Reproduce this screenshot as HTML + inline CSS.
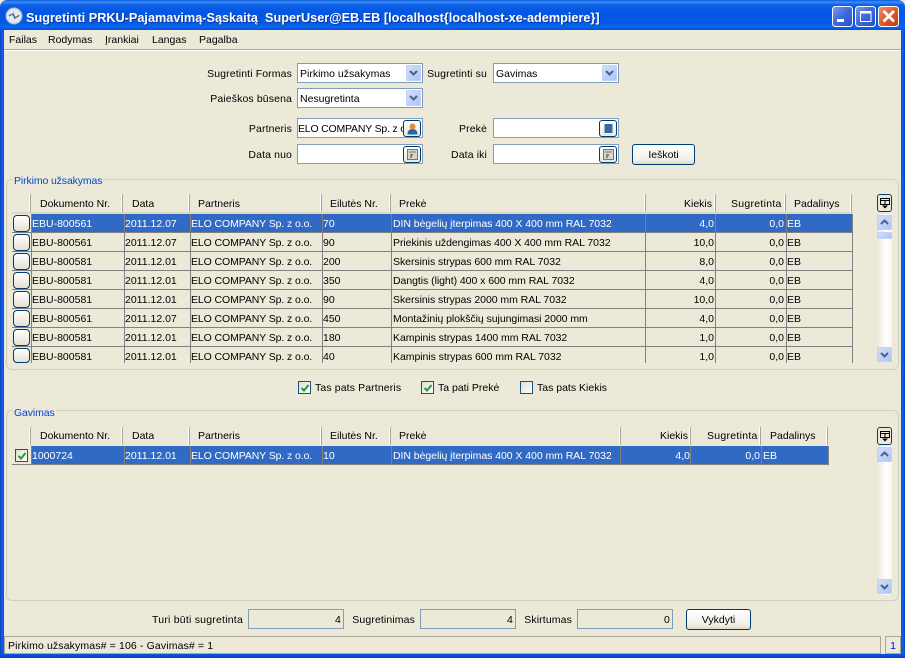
<!DOCTYPE html>
<html><head><meta charset="utf-8"><style>
html,body{margin:0;padding:0}
#w{position:relative;width:905px;height:658px;overflow:hidden;background:#ece9d8;font:10.5px/14px "Liberation Sans","DejaVu Sans",sans-serif;color:#000}
#w div,#w span.a,#w svg{position:absolute}
#w span{white-space:pre}
.l{position:absolute;white-space:pre}
.r{position:absolute;text-align:right;white-space:pre;letter-spacing:.12px}
.f{background:#fff;border:1px solid #7f9db9;box-sizing:border-box}
.ar{background:linear-gradient(135deg,#d5e1fc,#a9c2f5);border-radius:1px;box-shadow:inset 0 0 0 1px #c3d3f8}
.ib{box-sizing:border-box;border:1px solid #003c74;border-radius:3px;background:linear-gradient(#fff,#ece9d8)}
.bt{box-sizing:border-box;border:1px solid #003c74;border-radius:3px;background:linear-gradient(#fff,#f0efe6 80%,#dcd8c8);text-align:center;line-height:20px}
.gr{box-sizing:border-box;border:1px solid #d0d0bf;border-radius:6px}
.lg{color:#0046d5;background:#ece9d8;padding:0 1px;letter-spacing:-.12px}
.hs{width:1px;height:18px;background:#fff;border-right:1px solid #aca899;box-sizing:content-box}
.row{left:12px;height:19px;border-bottom:1px solid #808080;box-sizing:border-box}
.sel{background:#316ac5;color:#fff}
.v{width:1px;background:#808080}
.cb{left:13px;width:17px;height:17px;box-sizing:border-box;border:1px solid #003c74;border-radius:4px;background:linear-gradient(#fff,#e4e1d2)}
.s{position:absolute;top:3px;white-space:pre}
.c1{left:20px}.c2{left:113px}.c3{left:179px;letter-spacing:-.1px}.c4{left:311px}.c5{left:381px;letter-spacing:-.05px}
.q1{left:633px;width:69px;text-align:right}.q2{left:703px;width:69px;text-align:right}.q3{left:775px}
.q4{left:609px;width:69px;text-align:right}.q5{left:679px;width:69px;text-align:right}.q6{left:751px}
.sc{left:877px;width:15px;background:linear-gradient(90deg,#ebe8d9,#fff 60%,#f5f5f0)}
.lb{letter-spacing:.12px}
.sg{letter-spacing:.28px}
</style></head><body><div id="w">

<!-- window frame -->
<div style="left:0;top:0;width:905px;height:30px;background:linear-gradient(#0a5be0 0,#3a8cf5 2px,#0d5fe6 5px,#0457e2 12px,#0358e4 22px,#0a66f0 27px,#0350d0 30px);border-radius:7px 7px 0 0"></div>
<div style="left:0;top:30px;width:4px;height:628px;background:linear-gradient(90deg,#0a3ec0,#1160ea 50%,#0a50e0)"></div>
<div style="left:901px;top:30px;width:4px;height:628px;background:linear-gradient(90deg,#0a50e0,#1160ea 50%,#0a3ec0)"></div>
<div style="left:0;top:654px;width:905px;height:4px;background:linear-gradient(#0a55e0,#0a3ec0)"></div>

<svg style="left:5px;top:7px" width="18" height="18"><circle cx="9" cy="9" r="8" fill="#e4e8ee" stroke="#9fb2d8"/><path d="M4 9q3-3 5 0t5-1M8 6l2 6" stroke="#4a6a9c" fill="none" stroke-width="1.3"/></svg>
<span class="l" style="left:26px;top:10px;color:#fff;font:bold 12.7px/16px 'Liberation Sans',sans-serif;text-shadow:1px 1px 0 #0a3a9c">Sugretinti PRKU-Pajamavimą-Sąskaitą  SuperUser@EB.EB [localhost{localhost-xe-adempiere}]</span>

<svg style="left:832px;top:6px" width="67" height="21">
<defs><linearGradient id="b" x1="0" y1="0" x2="1" y2="1"><stop offset="0" stop-color="#7b9cf0"/><stop offset=".5" stop-color="#3e68da"/><stop offset="1" stop-color="#2a4ec8"/></linearGradient>
<linearGradient id="c" x1="0" y1="0" x2="1" y2="1"><stop offset="0" stop-color="#f09070"/><stop offset=".5" stop-color="#df5a30"/><stop offset="1" stop-color="#c23a10"/></linearGradient></defs>
<rect x=".5" y=".5" width="20" height="20" rx="3" fill="url(#b)" stroke="#fff"/>
<rect x="5" y="13" width="7" height="3" fill="#fff"/>
<rect x="23.5" y=".5" width="20" height="20" rx="3" fill="url(#b)" stroke="#fff"/>
<rect x="28.5" y="5.5" width="10.5" height="10" fill="none" stroke="#fff"/><rect x="28" y="5" width="11.5" height="2.5" fill="#fff"/>
<rect x="46.5" y=".5" width="20" height="20" rx="3" fill="url(#c)" stroke="#fff"/>
<path d="M51.5 5l10.5 10.5M62 5L51.5 15.5" stroke="#fff" stroke-width="2.8"/>
</svg>

<!-- menu -->
<span class="l" style="left:9px;top:33px">Failas</span>
<span class="l" style="left:48px;top:33px">Rodymas</span>
<span class="l" style="left:105px;top:33px">Įrankiai</span>
<span class="l" style="left:152px;top:33px">Langas</span>
<span class="l" style="left:199px;top:33px">Pagalba</span>
<div style="left:4px;top:49px;width:897px;height:1px;background:#aca899"></div>
<div style="left:4px;top:50px;width:897px;height:1px;background:#fff"></div>

<!-- form -->
<span class="r" style="right:613px;top:67px">Sugretinti Formas</span>
<span class="r" style="right:613px;top:92px">Paieškos būsena</span>
<span class="r" style="right:613px;top:122px">Partneris</span>
<span class="r" style="right:613px;top:148px">Data nuo</span>
<span class="r" style="right:418px;top:67px">Sugretinti su</span>
<span class="r" style="right:418px;top:122px">Prekė</span>
<span class="r" style="right:418px;top:148px">Data iki</span>

<div class="f" style="left:297px;top:63px;width:126px;height:20px"><span class="l" style="left:2px;top:3px">Pirkimo užsakymas</span></div>
<div class="ar" style="left:406px;top:65px;width:15px;height:16px"><svg style="left:3px;top:5px" width="9" height="6"><path d="M1 1l3.5 3.5L8 1" fill="none" stroke="#4d6185" stroke-width="2"/></svg></div>
<div class="f" style="left:297px;top:88px;width:126px;height:20px"><span class="l" style="left:2px;top:3px">Nesugretinta</span></div>
<div class="ar" style="left:406px;top:90px;width:15px;height:16px"><svg style="left:3px;top:5px" width="9" height="6"><path d="M1 1l3.5 3.5L8 1" fill="none" stroke="#4d6185" stroke-width="2"/></svg></div>
<div class="f" style="left:493px;top:63px;width:126px;height:20px"><span class="l" style="left:2px;top:3px">Gavimas</span></div>
<div class="ar" style="left:602px;top:65px;width:15px;height:16px"><svg style="left:3px;top:5px" width="9" height="6"><path d="M1 1l3.5 3.5L8 1" fill="none" stroke="#4d6185" stroke-width="2"/></svg></div>

<div class="f" style="left:297px;top:118px;width:126px;height:20px;overflow:hidden"><span class="l" style="left:0;top:3px;width:105px;overflow:hidden;letter-spacing:-.2px">ELO COMPANY Sp. z o.o.</span></div>
<div class="ib" style="left:403px;top:120px;width:18px;height:17px"><svg style="left:2px;top:1px" width="13" height="13"><path d="M1.500 12.500q0-5.500 5-5.500t5 5.500z" fill="#2f5fa8"/><circle cx="6.500" cy="4.500" r="3" fill="#d8903c"/></svg></div>
<div class="f" style="left:493px;top:118px;width:126px;height:20px"></div>
<div class="ib" style="left:599px;top:120px;width:18px;height:17px"><svg style="left:2px;top:1px" width="13" height="13"><rect x="2.500" y="2" width="8" height="9" fill="#3a66a8"/></svg></div>
<div class="f" style="left:297px;top:144px;width:126px;height:20px"></div>
<div class="ib" style="left:403px;top:146px;width:18px;height:17px"><svg style="left:2px;top:1px" width="13" height="13"><rect x="1.500" y="1.500" width="10" height="10" fill="#d8d6ca" stroke="#77776c"/><path d="M3 4h7" stroke="#77776c"/><path d="M4 7h3M4 9h2" stroke="#333"/></svg></div>
<div class="f" style="left:493px;top:144px;width:126px;height:20px"></div>
<div class="ib" style="left:599px;top:146px;width:18px;height:17px"><svg style="left:2px;top:1px" width="13" height="13"><rect x="1.500" y="1.500" width="10" height="10" fill="#d8d6ca" stroke="#77776c"/><path d="M3 4h7" stroke="#77776c"/><path d="M4 7h3M4 9h2" stroke="#333"/></svg></div>
<div class="bt" style="left:632px;top:144px;width:63px;height:21px">Ieškoti</div>

<!-- group 1 -->
<div class="gr" style="left:6px;top:179px;width:893px;height:191px"></div>
<span class="l lg" style="left:13px;top:174px">Pirkimo užsakymas</span>

<div style="left:12px;top:194px;width:842px;height:20px;background:#ece9d8">
<span class="s" style="left:28px">Dokumento Nr.</span><span class="s" style="left:120px">Data</span><span class="s" style="left:186px">Partneris</span><span class="s" style="left:318px">Eilutės Nr.</span><span class="s" style="left:387px">Prekė</span><span class="s" style="left:672px">Kiekis</span><span class="s sg" style="left:719px">Sugretinta</span><span class="s" style="left:782px">Padalinys</span>
</div>
<div class="hs" style="left:29px;top:194px"></div><div class="hs" style="left:121px;top:194px"></div><div class="hs" style="left:188px;top:194px"></div><div class="hs" style="left:320px;top:194px"></div><div class="hs" style="left:389px;top:194px"></div><div class="hs" style="left:644px;top:194px"></div><div class="hs" style="left:714px;top:194px"></div><div class="hs" style="left:784px;top:194px"></div><div class="hs" style="left:850px;top:194px"></div>
<div style="left:12px;top:212px;width:841px;height:2px;background:#dcd8c8"></div>

<div class="row sel" style="top:214px;width:841px"><span class="s c1">EBU-800561</span><span class="s c2">2011.12.07</span><span class="s c3">ELO COMPANY Sp. z o.o.</span><span class="s c4">70</span><span class="s c5">DIN bėgelių įterpimas 400 X 400 mm RAL 7032</span><span class="s q1">4,0</span><span class="s q2">0,0</span><span class="s q3">EB</span></div>
<div class="row" style="top:233px;width:841px"><span class="s c1">EBU-800561</span><span class="s c2">2011.12.07</span><span class="s c3">ELO COMPANY Sp. z o.o.</span><span class="s c4">90</span><span class="s c5">Priekinis uždengimas 400 X 400 mm RAL 7032</span><span class="s q1">10,0</span><span class="s q2">0,0</span><span class="s q3">EB</span></div>
<div class="row" style="top:252px;width:841px"><span class="s c1">EBU-800581</span><span class="s c2">2011.12.01</span><span class="s c3">ELO COMPANY Sp. z o.o.</span><span class="s c4">200</span><span class="s c5">Skersinis strypas 600 mm RAL 7032</span><span class="s q1">8,0</span><span class="s q2">0,0</span><span class="s q3">EB</span></div>
<div class="row" style="top:271px;width:841px"><span class="s c1">EBU-800581</span><span class="s c2">2011.12.01</span><span class="s c3">ELO COMPANY Sp. z o.o.</span><span class="s c4">350</span><span class="s c5">Dangtis (light) 400 x 600 mm RAL 7032</span><span class="s q1">4,0</span><span class="s q2">0,0</span><span class="s q3">EB</span></div>
<div class="row" style="top:290px;width:841px"><span class="s c1">EBU-800581</span><span class="s c2">2011.12.01</span><span class="s c3">ELO COMPANY Sp. z o.o.</span><span class="s c4">90</span><span class="s c5">Skersinis strypas 2000 mm RAL 7032</span><span class="s q1">10,0</span><span class="s q2">0,0</span><span class="s q3">EB</span></div>
<div class="row" style="top:309px;width:841px"><span class="s c1">EBU-800561</span><span class="s c2">2011.12.07</span><span class="s c3">ELO COMPANY Sp. z o.o.</span><span class="s c4">450</span><span class="s c5">Montažinių plokščių sujungimasi 2000 mm</span><span class="s q1">4,0</span><span class="s q2">0,0</span><span class="s q3">EB</span></div>
<div class="row" style="top:328px;width:841px"><span class="s c1">EBU-800581</span><span class="s c2">2011.12.01</span><span class="s c3">ELO COMPANY Sp. z o.o.</span><span class="s c4">180</span><span class="s c5">Kampinis strypas 1400 mm RAL 7032</span><span class="s q1">1,0</span><span class="s q2">0,0</span><span class="s q3">EB</span></div>
<div class="row" style="top:347px;width:841px;height:16px;border-bottom:0"><span class="s c1">EBU-800581</span><span class="s c2">2011.12.01</span><span class="s c3">ELO COMPANY Sp. z o.o.</span><span class="s c4">40</span><span class="s c5">Kampinis strypas 600 mm RAL 7032</span><span class="s q1">1,0</span><span class="s q2">0,0</span><span class="s q3">EB</span></div>

<div class="v" style="left:31px;top:214px;height:149px"></div><div class="v" style="left:124px;top:214px;height:149px"></div><div class="v" style="left:190px;top:214px;height:149px"></div><div class="v" style="left:322px;top:214px;height:149px"></div><div class="v" style="left:391px;top:214px;height:149px"></div><div class="v" style="left:645px;top:214px;height:149px"></div><div class="v" style="left:715px;top:214px;height:149px"></div><div class="v" style="left:786px;top:214px;height:149px"></div><div class="v" style="left:852px;top:214px;height:149px"></div>

<div style="left:12px;top:214px;width:19px;height:18px;background:#ece9d8"></div>
<div class="cb" style="top:215px"></div><div class="cb" style="top:234px"></div><div class="cb" style="top:253px"></div><div class="cb" style="top:272px"></div><div class="cb" style="top:291px"></div><div class="cb" style="top:310px"></div><div class="cb" style="top:329px"></div><div class="cb" style="top:348px;height:15px"></div>

<div class="sc" style="top:214px;height:148px"></div>
<div class="ib" style="left:877px;top:194px;width:15px;height:18px;background:#ece9d8"><svg style="left:1px;top:2px" width="12" height="13"><path d="M1.500 1.500h9v6h-9zM1.500 3.500h9M6 3.500v4" fill="none" stroke="#000"/><path d="M3 8.500h6L6 11.500z" fill="#000"/></svg></div>
<div class="ar" style="left:877px;top:215px;width:15px;height:15px"><svg style="left:3px;top:4px" width="9" height="6"><path d="M1 5l3.500-3.500L8 5" fill="none" stroke="#4d6185" stroke-width="2"/></svg></div>
<div class="ar" style="left:877px;top:232px;width:15px;height:7px"></div>
<div class="ar" style="left:877px;top:347px;width:15px;height:15px"><svg style="left:3px;top:5px" width="9" height="6"><path d="M1 1l3.500 3.500L8 1" fill="none" stroke="#4d6185" stroke-width="2"/></svg></div>

<!-- checkboxes -->
<div class="f" style="left:298px;top:381px;width:13px;height:13px;border-color:#1c5180;background:linear-gradient(135deg,#dcdcd7,#fff)"><svg style="left:1px;top:1px" width="10" height="10"><path d="M1.500 5l2.500 2.500L8.500 2" fill="none" stroke="#21a121" stroke-width="2"/></svg></div>
<span class="l lb" style="left:315px;top:381px">Tas pats Partneris</span>
<div class="f" style="left:421px;top:381px;width:13px;height:13px;border-color:#1c5180;background:linear-gradient(135deg,#dcdcd7,#fff)"><svg style="left:1px;top:1px" width="10" height="10"><path d="M1.500 5l2.500 2.500L8.500 2" fill="none" stroke="#21a121" stroke-width="2"/></svg></div>
<span class="l" style="left:438px;top:381px">Ta pati Prekė</span>
<div class="f" style="left:520px;top:381px;width:13px;height:13px;border-color:#1c5180;background:linear-gradient(135deg,#dcdcd7,#fff)"></div>
<span class="l" style="left:537px;top:381px">Tas pats Kiekis</span>

<!-- group 2 -->
<div class="gr" style="left:6px;top:410px;width:893px;height:191px"></div>
<span class="l lg" style="left:13px;top:406px">Gavimas</span>

<div style="left:12px;top:426px;width:817px;height:20px;background:#ece9d8">
<span class="s" style="left:28px">Dokumento Nr.</span><span class="s" style="left:120px">Data</span><span class="s" style="left:186px">Partneris</span><span class="s" style="left:318px">Eilutės Nr.</span><span class="s" style="left:387px">Prekė</span><span class="s" style="left:648px">Kiekis</span><span class="s sg" style="left:695px">Sugretinta</span><span class="s" style="left:758px">Padalinys</span>
</div>
<div class="hs" style="left:29px;top:427px"></div><div class="hs" style="left:121px;top:427px"></div><div class="hs" style="left:188px;top:427px"></div><div class="hs" style="left:320px;top:427px"></div><div class="hs" style="left:389px;top:427px"></div><div class="hs" style="left:619px;top:427px"></div><div class="hs" style="left:689px;top:427px"></div><div class="hs" style="left:759px;top:427px"></div><div class="hs" style="left:826px;top:427px"></div>

<div class="row sel" style="top:446px;width:817px"><span class="s c1">1000724</span><span class="s c2">2011.12.01</span><span class="s c3">ELO COMPANY Sp. z o.o.</span><span class="s c4">10</span><span class="s c5">DIN bėgelių įterpimas 400 X 400 mm RAL 7032</span><span class="s q4">4,0</span><span class="s q5">0,0</span><span class="s q6">EB</span></div>
<div class="v" style="left:31px;top:446px;height:19px"></div><div class="v" style="left:124px;top:446px;height:19px"></div><div class="v" style="left:190px;top:446px;height:19px"></div><div class="v" style="left:322px;top:446px;height:19px"></div><div class="v" style="left:391px;top:446px;height:19px"></div><div class="v" style="left:620px;top:446px;height:19px"></div><div class="v" style="left:690px;top:446px;height:19px"></div><div class="v" style="left:761px;top:446px;height:19px"></div><div class="v" style="left:828px;top:446px;height:19px"></div>
<div style="left:12px;top:446px;width:19px;height:18px;background:#ece9d8"></div>
<div class="f" style="left:15px;top:449px;width:13px;height:13px;border-color:#1c5180;background:linear-gradient(135deg,#dcdcd7,#fff)"><svg style="left:1px;top:1px" width="10" height="10"><path d="M1.500 5l2.500 2.500L8.500 2" fill="none" stroke="#21a121" stroke-width="2"/></svg></div>

<div class="sc" style="top:446px;height:149px"></div>
<div class="ib" style="left:877px;top:427px;width:15px;height:18px;background:#ece9d8"><svg style="left:1px;top:2px" width="12" height="13"><path d="M1.500 1.500h9v6h-9zM1.500 3.500h9M6 3.500v4" fill="none" stroke="#000"/><path d="M3 8.500h6L6 11.500z" fill="#000"/></svg></div>
<div class="ar" style="left:877px;top:447px;width:15px;height:15px"><svg style="left:3px;top:4px" width="9" height="6"><path d="M1 5l3.500-3.500L8 5" fill="none" stroke="#4d6185" stroke-width="2"/></svg></div>
<div class="ar" style="left:877px;top:579px;width:15px;height:15px"><svg style="left:3px;top:5px" width="9" height="6"><path d="M1 1l3.500 3.500L8 1" fill="none" stroke="#4d6185" stroke-width="2"/></svg></div>

<!-- bottom -->
<span class="r" style="right:662px;top:613px;letter-spacing:.22px">Turi būti sugretinta</span>
<div class="f" style="left:248px;top:609px;width:96px;height:20px;background:#ece9d8"><span class="r" style="right:2px;top:3px">4</span></div>
<span class="r" style="right:490px;top:613px">Sugretinimas</span>
<div class="f" style="left:420px;top:609px;width:96px;height:20px;background:#ece9d8"><span class="r" style="right:2px;top:3px">4</span></div>
<span class="r" style="right:333px;top:613px">Skirtumas</span>
<div class="f" style="left:577px;top:609px;width:96px;height:20px;background:#ece9d8"><span class="r" style="right:2px;top:3px">0</span></div>
<div class="bt" style="left:686px;top:609px;width:65px;height:21px">Vykdyti</div>

<!-- status -->
<div style="left:4px;top:636px;width:877px;height:18px;box-sizing:border-box;border:1px solid #aca899"><span class="l" style="left:3px;top:2px;letter-spacing:.13px">Pirkimo užsakymas# = 106 - Gavimas# = 1</span></div>
<div style="left:885px;top:636px;width:16px;height:18px;box-sizing:border-box;border:1px solid #aca899;color:#00f;text-align:center;line-height:18px">1</div>
</div></body></html>
